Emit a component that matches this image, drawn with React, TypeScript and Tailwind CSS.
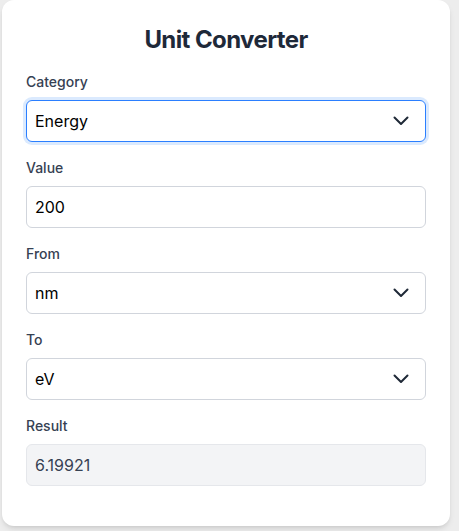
import { useState } from "react";

function Chevron() {
    return (
        <svg width="16" height="10" viewBox="0 0 16 10" fill="none" className="pointer-events-none absolute right-[17px] top-1/2 -translate-y-1/2">
            <path d="M1.5 1.5 8 8l6.5-6.5" stroke="#1f2937" strokeWidth="2" strokeLinecap="round" strokeLinejoin="round" />
        </svg>
    );
}

function Field({ label, children }: { label: string; children: React.ReactNode }) {
    return (
        <div>
            <label className="block text-sm font-medium text-gray-700 mb-2">{label}</label>
            {children}
        </div>
    );
}

function SelectBox({ value, options, focused }: { value: string; options: string[]; focused?: boolean }) {
    const [v, setV] = useState(value);
    return (
        <div className="relative">
            <select
                value={v}
                onChange={(e) => setV(e.target.value)}
                className={
                    focused
                        ? "w-full h-[42px] appearance-none rounded-md border border-blue-500 bg-white px-2 text-base text-black outline-none ring-[3px] ring-blue-100"
                        : "w-full h-[42px] appearance-none rounded-md border border-gray-300 bg-white px-2 text-base text-black outline-none"
                }
            >
                {options.map((o) => (
                    <option key={o}>{o}</option>
                ))}
            </select>
            <Chevron />
        </div>
    );
}

export default function App() {
    const [value, setValue] = useState("200");
    const num = parseFloat(value) || 0;
    const result = num ? (1239.84198 / num).toPrecision(6) : "";

    return (
        <div className="min-h-screen bg-[#ededed] pl-[2px] font-['Inter',sans-serif]">
            <div className="w-[448px] bg-white rounded-xl shadow-md px-6 pt-6 pb-10">
                <h1 className="text-2xl font-bold tracking-tight text-gray-800 text-center mb-4">Unit Converter</h1>
                <div className="flex flex-col gap-4">
                    <Field label="Category">
                        <SelectBox value="Energy" options={["Length", "Mass", "Energy", "Temperature"]} focused />
                    </Field>
                    <Field label="Value">
                        <input
                            value={value}
                            onChange={(e) => setValue(e.target.value)}
                            className="w-full h-[42px] rounded-md border border-gray-300 bg-white px-2 text-base text-black outline-none"
                        />
                    </Field>
                    <Field label="From">
                        <SelectBox value="nm" options={["nm", "eV", "J", "cm⁻¹"]} />
                    </Field>
                    <Field label="To">
                        <SelectBox value="eV" options={["nm", "eV", "J", "cm⁻¹"]} />
                    </Field>
                    <Field label="Result">
                        <div className="w-full h-[42px] rounded-md border border-gray-200 bg-gray-100 px-2 flex items-center text-base text-gray-700">
                            {result}
                        </div>
                    </Field>
                </div>
            </div>
        </div>
    );
}
